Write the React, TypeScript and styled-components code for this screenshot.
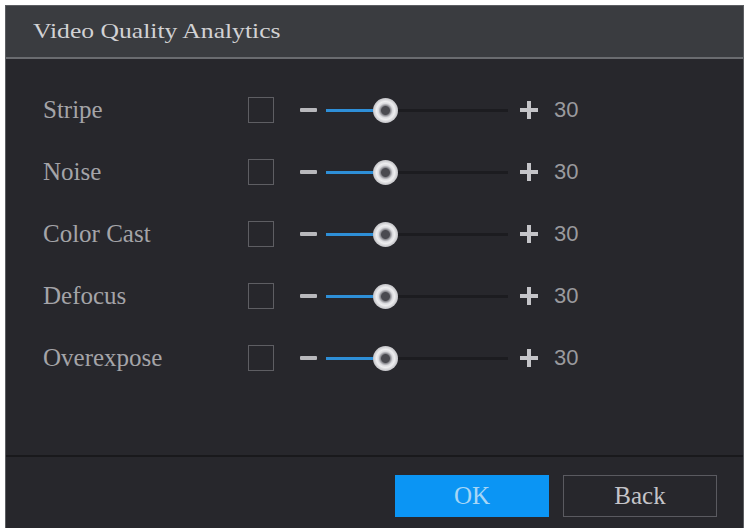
import React from "react";
import styled, { createGlobalStyle } from "styled-components";

const Global = createGlobalStyle`
  html, body { margin: 0; padding: 0; background: #ffffff; }
  body { width: 748px; height: 528px; overflow: hidden; }
  * { box-sizing: border-box; }
`;

const Dialog = styled.div`
  margin: 5px 0 0 5px;
  width: 739px;
  height: 531px;
  border: 1px solid #5c5e62;
  border-bottom: none;
  background: #27272c;
  display: flex;
  flex-direction: column;
`;

const TitleBar = styled.div`
  height: 53px;
  flex: none;
  background: #3a3c40;
  border-bottom: 2px solid #6a6c70;
  display: flex;
  align-items: center;
  padding-left: 27px;
`;

const Title = styled.span`
  font-family: "Liberation Serif", "DejaVu Serif", serif;
  font-size: 21px;
  color: #d2d2d4;
  display: inline-block;
  transform: scaleX(1.22);
  transform-origin: left center;
`;

const Body = styled.div`
  flex: 1;
  display: flex;
  flex-direction: column;
  padding-top: 20px;
`;

const Row = styled.div`
  height: 62px;
  display: flex;
  align-items: center;
  padding-left: 37px;
`;

const Label = styled.div`
  width: 205px;
  font-family: "Liberation Serif", "DejaVu Serif", serif;
  font-size: 25px;
  color: #a4a4a8;
`;

const Check = styled.div`
  width: 26px;
  height: 26px;
  border: 1.5px solid #5e5e63;
  margin-right: 26px;
`;

const Minus = styled.div`
  width: 17px;
  height: 4px;
  background: #b8b8bc;
  border-radius: 1px;
  margin-right: 9px;
`;

const Track = styled.div`
  position: relative;
  width: 182px;
  height: 3px;
  background: #1c1c20;
  margin-right: 12px;
`;

const Fill = styled.div`
  position: absolute;
  left: 0;
  top: 0;
  height: 3px;
  background: #2e8fd8;
`;

const Thumb = styled.div`
  position: absolute;
  top: 50%;
  width: 25px;
  height: 25px;
  margin-left: -12px;
  margin-top: -12px;
  border-radius: 50%;
  background: radial-gradient(circle at 50% 50%, #4a4a50 0 4px, #8a8a90 5px, #d8d8dc 7px, #eeeef0 9px, #c8c8cc 12px);
`;

const Plus = styled.div`
  position: relative;
  width: 18px;
  height: 18px;
  margin-right: 16px;
  &::before, &::after {
    content: "";
    position: absolute;
    background: #c4c4c8;
  }
  &::before { left: 0; top: 7px; width: 18px; height: 4px; }
  &::after { left: 7px; top: 0; width: 4px; height: 18px; }
`;

const Value = styled.div`
  font-family: "Liberation Sans", Arial, sans-serif;
  font-size: 22px;
  color: #9a9a9e;
`;

const Footer = styled.div`
  height: 81px;
  flex: none;
  border-top: 2px solid #19191c;
  display: flex;
  justify-content: flex-end;
  align-items: flex-start;
  padding: 18px 26px 0 0;
  gap: 14px;
`;

const Button = styled.button<{ $primary?: boolean }>`
  width: 154px;
  height: 42px;
  padding: 0;
  font-family: "Liberation Serif", "DejaVu Serif", serif;
  font-size: 25px;
  cursor: pointer;
  background: ${(p) => (p.$primary ? "#0b95f4" : "#27272c")};
  color: ${(p) => (p.$primary ? "#a6d6f6" : "#c4c4c8")};
  border: ${(p) => (p.$primary ? "none" : "1.5px solid #5a5a60")};
`;

const items = ["Stripe", "Noise", "Color Cast", "Defocus", "Overexpose"];

function Slider({ value }: { value: number }) {
  const pct = (value / 92) * 100;
  return (
    <>
      <Minus />
      <Track>
        <Fill style={{ width: `${pct}%` }} />
        <Thumb style={{ left: `${pct}%` }} />
      </Track>
      <Plus />
      <Value>{value}</Value>
    </>
  );
}

export default function App() {
  return (
    <>
      <Global />
      <Dialog>
        <TitleBar>
          <Title>Video Quality Analytics</Title>
        </TitleBar>
        <Body>
          {items.map((it) => (
            <Row key={it}>
              <Label>{it}</Label>
              <Check />
              <Slider value={30} />
            </Row>
          ))}
        </Body>
        <Footer>
          <Button $primary>OK</Button>
          <Button>Back</Button>
        </Footer>
      </Dialog>
    </>
  );
}
